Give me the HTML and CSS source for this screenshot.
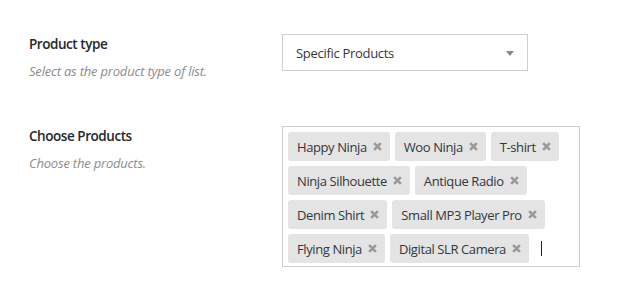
FILE: index.html
```html
<!DOCTYPE html>
<html>

<head>
  <title>Product settings</title>
  <link rel="stylesheet" href="styles.css">
</head>

<body>
  <div class="settings">
    <div class="field">
      <div class="field-label">
        <h3>Product type</h3>
        <p class="desc">Select as the product type of list.</p>
      </div>
      <div class="select">
        <span>Specific Products</span>
        <span class="arrow"></span>
      </div>
    </div>

    <div class="field">
      <div class="field-label">
        <h3>Choose Products</h3>
        <p class="desc">Choose the products.</p>
      </div>
      <div class="tags">
        <span class="tag">Happy Ninja <svg class="remove" viewBox="0 0 8 8"><path d="M1 1L7 7M7 1L1 7" /></svg></span>
        <span class="tag">Woo Ninja <svg class="remove" viewBox="0 0 8 8"><path d="M1 1L7 7M7 1L1 7" /></svg></span>
        <span class="tag">T-shirt <svg class="remove" viewBox="0 0 8 8"><path d="M1 1L7 7M7 1L1 7" /></svg></span>
        <span class="tag">Ninja Silhouette <svg class="remove" viewBox="0 0 8 8"><path d="M1 1L7 7M7 1L1 7" /></svg></span>
        <span class="tag">Antique Radio <svg class="remove" viewBox="0 0 8 8"><path d="M1 1L7 7M7 1L1 7" /></svg></span>
        <span class="tag">Denim Shirt <svg class="remove" viewBox="0 0 8 8"><path d="M1 1L7 7M7 1L1 7" /></svg></span>
        <span class="tag">Small MP3 Player Pro <svg class="remove" viewBox="0 0 8 8"><path d="M1 1L7 7M7 1L1 7" /></svg></span>
        <span class="tag">Flying Ninja <svg class="remove" viewBox="0 0 8 8"><path d="M1 1L7 7M7 1L1 7" /></svg></span>
        <span class="tag">Digital SLR Camera <svg class="remove" viewBox="0 0 8 8"><path d="M1 1L7 7M7 1L1 7" /></svg></span>
        <span class="caret"></span>
      </div>
    </div>
  </div>
</body>

</html>
```

FILE: styles.css
```css
* {
  margin: 0;
  padding: 0;
  box-sizing: border-box;
}

body {
  font-family: 'Open Sans', 'Noto Sans', sans-serif;
  background-color: #fff;
  color: #23282d;
}

.settings {
  padding: 34px 0 0 29px;
}

.field {
  display: flex;
  align-items: flex-start;
  margin-bottom: 46px;
}

.field-label {
  width: 253px;
  flex-shrink: 0;
}

.field-label h3 {
  font-size: 13.5px;
  font-weight: 600;
  line-height: 20px;
  letter-spacing: -0.45px;
  color: #23282d;
}

.desc {
  margin-top: 8px;
  font-size: 13px;
  line-height: 18px;
  font-style: italic;
  letter-spacing: -0.2px;
  color: #8c8c8c;
}

.select {
  width: 246px;
  height: 37px;
  border: 1px solid #cfcfcf;
  padding: 0 13px;
  display: flex;
  align-items: center;
  justify-content: space-between;
  font-size: 13px;
  letter-spacing: -0.3px;
  color: #32373c;
}

.arrow {
  width: 0;
  height: 0;
  margin-top: 2px;
  border-left: 4px solid transparent;
  border-right: 4px solid transparent;
  border-top: 5px solid #888;
}

.tags {
  width: 298px;
  border: 1px solid #cfcfcf;
  padding: 5px 5px 3px 5px;
  display: flex;
  flex-wrap: wrap;
  align-items: center;
  gap: 5px;
}

.tag {
  display: inline-flex;
  align-items: center;
  height: 29px;
  padding: 0 8px 0 9px;
  background-color: #e4e4e4;
  border-radius: 3px;
  font-size: 13px;
  letter-spacing: -0.4px;
  color: #32373c;
  white-space: nowrap;
}

.remove {
  width: 9px;
  height: 9px;
  margin-left: 6px;
  stroke: #999;
  stroke-width: 2.3;
  fill: none;
}

.caret {
  width: 1px;
  height: 15px;
  margin-left: 7px;
  background-color: #222;
}
```
